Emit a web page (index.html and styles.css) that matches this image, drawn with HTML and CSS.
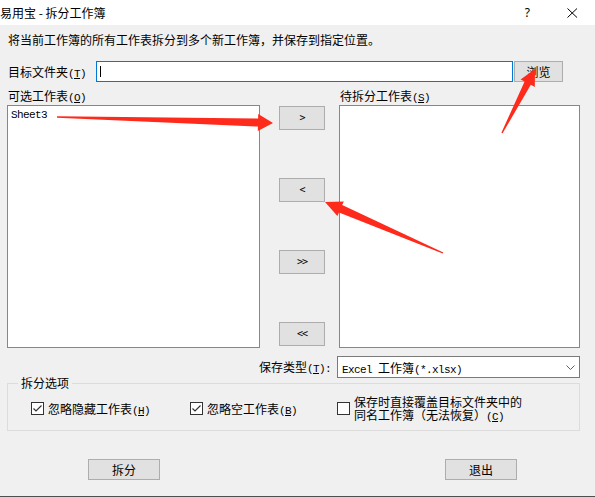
FILE: index.html
```html
<!DOCTYPE html>
<html lang="zh-CN">
<head>
    <meta charset="UTF-8">
    <meta name="viewport" content="width=device-width, initial-scale=1.0">
    <title>易用宝 - 拆分工作簿</title>
    <link rel="stylesheet" href="styles.css">
</head>
<body>
<div class="window">
    <div class="titlebar">
        <span class="title">易用宝 - 拆分工作簿</span>
        <div class="title-controls">
            <span class="help">?</span>
            <svg class="close" width="11" height="10" viewBox="0 0 11 10">
                <path d="M0.5 0.5 L10 9.5 M10 0.5 L0.5 9.5" stroke="#000" stroke-width="1" fill="none"/>
            </svg>
        </div>
    </div>

    <div class="dialog">
        <p class="desc">将当前工作簿的所有工作表拆分到多个新工作簿，并保存到指定位置。</p>

        <!-- target folder -->
        <div class="target-row">
            <label class="field-label">目标文件夹<span class="key">(<u>T</u>)</span></label>
            <div class="text-input"><span class="caret"></span></div>
            <button class="btn browse">浏览</button>
        </div>

        <!-- sheet lists -->
        <div class="lists">
            <div class="list-col left-col">
                <div class="list-label">可选工作表<span class="key">(<u>O</u>)</span></div>
                <ul class="list-box">
                    <li>Sheet3</li>
                </ul>
            </div>
            <div class="move-buttons">
                <button class="btn move">&gt;</button>
                <button class="btn move">&lt;</button>
                <button class="btn move">&gt;&gt;</button>
                <button class="btn move">&lt;&lt;</button>
            </div>
            <div class="list-col right-col">
                <div class="list-label">待拆分工作表<span class="key">(<u>S</u>)</span></div>
                <ul class="list-box"></ul>
            </div>
        </div>

        <div class="save-row">
            <span class="save-label">保存类型<span class="key">(<u>T</u>):</span></span>
            <div class="combo">
                <span class="combo-text">Excel <span class="cjk">工作簿</span>(*.xlsx)</span>
                <svg class="chevron" width="9" height="5" viewBox="0 0 9 5">
                    <path d="M0.5 0.5 L4.5 4.5 L8.5 0.5" stroke="#606060" stroke-width="1" fill="none"/>
                </svg>
            </div>
        </div>

        <fieldset class="options">
            <legend>拆分选项</legend>
            <div class="option-row">
                <label class="check">
                    <span class="box"><svg width="11" height="11" viewBox="0 0 11 11"><path d="M1.5 5.5 L4 8 L9.5 2.5" stroke="#333" stroke-width="1.2" fill="none"/></svg></span>
                    <span>忽略隐藏工作表<span class="key">(<u>H</u>)</span></span>
                </label>
                <label class="check">
                    <span class="box"><svg width="11" height="11" viewBox="0 0 11 11"><path d="M1.5 5.5 L4 8 L9.5 2.5" stroke="#333" stroke-width="1.2" fill="none"/></svg></span>
                    <span>忽略空工作表<span class="key">(<u>B</u>)</span></span>
                </label>
                <label class="check">
                    <span class="box"></span>
                    <span class="two-line">保存时直接覆盖目标文件夹中的<br>同名工作簿（无法恢复）<span class="key">(<u>C</u>)</span></span>
                </label>
            </div>
        </fieldset>

        <div class="actions">
            <button class="btn action">拆分</button>
            <button class="btn action">退出</button>
        </div>
    </div>

    <!-- red annotation arrows drawn over the dialog -->
    <svg class="arrows" width="595" height="497" viewBox="0 0 595 497">
        <polygon points="57,116.3 258.1,118.6 258.2,114.1 273,123 257.8,131.1 257.9,126.6 57,117.7" fill="#fe2a1c"/>
        <polygon points="443.3,252.4 342.2,205.1 343.8,201.4 325,202 337.4,216.1 339,212.4 442.7,253.6" fill="#fe2a1c"/>
        <polygon points="502.6,133.3 530.8,84.8 534.8,86.9 535,69 520.6,79.5 524.6,81.6 501.4,132.7" fill="#fe2a1c"/>
    </svg>
</div>
</body>
</html>
```

FILE: styles.css
```css
body {
    margin: 0;
    padding: 0;
    font-family: "Noto Sans CJK SC", "Noto Sans", sans-serif;
    font-size: 12px;
    color: #000;
    background: #f0f0f0;
}

.window {
    position: relative;
    width: 595px;
    height: 496px;
    background: #f0f0f0;
    border-bottom: 1px solid #505050;
    overflow: hidden;
}

/* title bar */
.titlebar {
    height: 25px;
    background: #fff;
    display: flex;
    justify-content: space-between;
    align-items: center;
}

.title {
    line-height: 25px;
    padding-left: 0;
}

.title-controls {
    display: flex;
    align-items: center;
    gap: 37px;
    padding-right: 17px;
}

.help {
    font-family: "Noto Sans", sans-serif;
    font-size: 12px;
    line-height: 25px;
}

.close {
    display: block;
}

/* dialog body */
.dialog {
    padding: 0 15px 0 7px;
}

.desc {
    margin: 7px 0 0;
    padding-left: 1px;
    line-height: 16px;
}

.key {
    font-family: "Liberation Mono", monospace;
    font-size: 11px;
    letter-spacing: -0.6px;
    line-height: 10px;
}

.target-row {
    display: flex;
    margin-top: 13px;
    height: 21px;
}

.field-label {
    flex: 0 0 88px;
    padding-left: 1px;
    line-height: 21px;
}

.text-input {
    width: 417px;
    height: 21px;
    box-sizing: border-box;
    border: 1px solid #0078d7;
    background: #fff;
    display: flex;
    align-items: center;
}

.caret {
    width: 1px;
    height: 11px;
    margin-left: 3px;
    background: #000;
}

.btn {
    font-family: "Noto Sans CJK SC", sans-serif;
    font-size: 12px;
    background: #e1e1e1;
    border: 1px solid #adadad;
    padding: 0;
    margin: 0;
    color: #000;
    box-sizing: border-box;
}

.browse {
    width: 49px;
    height: 21px;
    margin-left: 1px;
    line-height: 19px;
}

/* lists */
.lists {
    display: flex;
    margin-top: 4px;
}

.left-col {
    width: 253px;
}

.right-col {
    width: 241px;
}

.list-label {
    height: 19px;
    line-height: 19px;
    padding-left: 1px;
}

.list-box {
    list-style: none;
    margin: 0;
    padding: 2px 2px;
    height: 243px;
    box-sizing: border-box;
    background: #fff;
    border: 1px solid #828790;
}

.list-box li {
    font-family: "Liberation Mono", monospace;
    font-size: 11px;
    letter-spacing: -0.6px;
    line-height: 14px;
    padding-left: 1px;
}

.move-buttons {
    display: flex;
    flex-direction: column;
    gap: 48px;
    padding-top: 20px;
    margin: 0 14px 0 19px;
}

.move {
    width: 46px;
    height: 24px;
    font-family: "DejaVu Sans Mono", monospace;
    font-size: 10px;
    letter-spacing: -1px;
    line-height: 22px;
}

/* save type */
.save-row {
    display: flex;
    justify-content: flex-end;
    align-items: center;
    margin-top: 8px;
    height: 22px;
}

.save-label {
    margin-right: 6px;
    line-height: 22px;
}

.combo {
    width: 243px;
    height: 22px;
    box-sizing: border-box;
    border: 1px solid #7a7a7a;
    background: #fff;
    display: flex;
    align-items: center;
    justify-content: space-between;
    padding: 0 4px 0 4px;
}

.combo-text {
    font-family: "Liberation Mono", monospace;
    font-size: 11px;
    letter-spacing: -0.6px;
    white-space: pre;
}

.cjk {
    font-family: "Noto Sans CJK SC", sans-serif;
    font-size: 12px;
    letter-spacing: 0;
}

.chevron {
    display: block;
}

/* options group */
.options {
    margin: 0;
    padding: 0;
    border: 1px solid #dcdcdc;
}

.options legend {
    margin-left: 10px;
    padding: 0 3px;
    line-height: 10px;
}

.option-row {
    display: grid;
    grid-template-columns: 159px 147px auto;
    align-items: center;
    height: 27px;
    padding: 7px 0 8px 23px;
}

.check {
    display: flex;
    align-items: center;
    line-height: 16px;
}

.box {
    width: 13px;
    height: 13px;
    box-sizing: border-box;
    border: 1px solid #333;
    background: #fff;
    margin-right: 4px;
    flex: none;
}

.box svg {
    display: block;
}

.two-line {
    line-height: 13px;
}

/* bottom buttons */
.actions {
    display: flex;
    gap: 285px;
    margin-top: 28px;
    padding-left: 81px;
}

.action {
    width: 72px;
    height: 21px;
    line-height: 19px;
}

.arrows {
    position: absolute;
    top: 0;
    left: 0;
    pointer-events: none;
}
```
